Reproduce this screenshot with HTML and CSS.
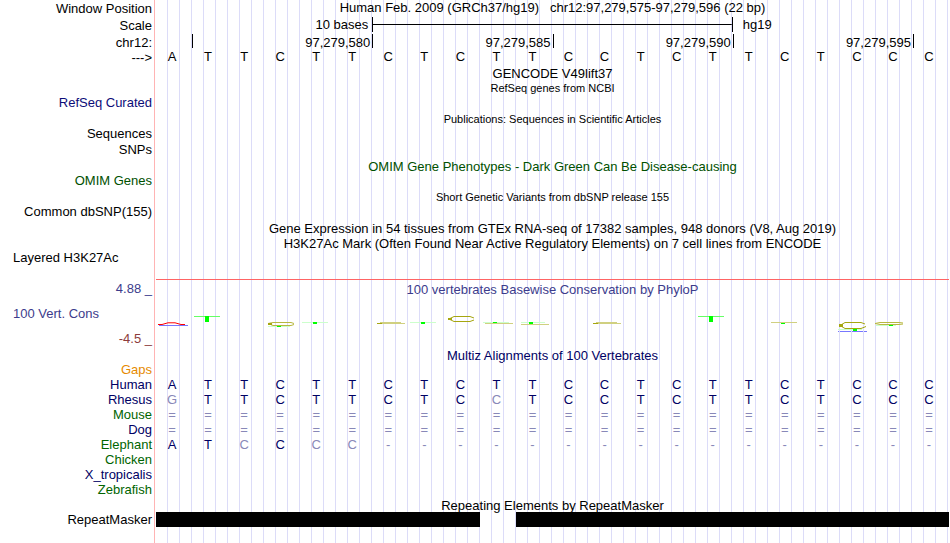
FILE: index.html
```html
<!DOCTYPE html>
<html lang="en">
<head>
  <meta charset="utf-8">
  <title>Genome Browser - hg19 chr12:97,279,575-97,279,596</title>
  <link rel="stylesheet" href="styles.css">
</head>
<body>
  <main class="browser">
    <div class="row tall">
      <div class="label">Window Position</div>
      <div class="track title pre">Human Feb. 2009 (GRCh37/hg19)   chr12:97,279,575-97,279,596 (22 bp)</div>
    </div>
    <div class="row tall">
      <div class="label">Scale</div>
      <div class="track bases scale">
        <span class="scale-size">10 bases</span>
        <span class="scale-bar"></span>
        <span class="scale-db">hg19</span>
      </div>
    </div>
    <div class="row">
      <div class="label lower">chr12:</div>
      <div class="track bases ruler">
        <span class="tick first"></span>
        <span class="tick">97,279,580</span>
        <span class="tick">97,279,585</span>
        <span class="tick">97,279,590</span>
        <span class="tick">97,279,595</span>
      </div>
    </div>
    <div class="row tall">
      <div class="label">---&gt;</div>
      <div class="track bases" data-seq="ATTCTTCTCTTCCTCTTCTCCC"></div>
    </div>

    <!-- gene and variant tracks -->
    <div class="row"><div class="label"></div><div class="track title">GENCODE V49lift37</div></div>
    <div class="row"><div class="label"></div><div class="track title small">RefSeq genes from NCBI</div></div>
    <div class="row"><div class="label upper refseq">RefSeq Curated</div><div class="track"></div></div>
    <div class="row mid"><div class="label"></div><div class="track title small">Publications: Sequences in Scientific Articles</div></div>
    <div class="row"><div class="label upper">Sequences</div><div class="track"></div></div>
    <div class="row mid"><div class="label">SNPs</div><div class="track"></div></div>
    <div class="row mid"><div class="label"></div><div class="track title omim">OMIM Gene Phenotypes - Dark Green Can Be Disease-causing</div></div>
    <div class="row"><div class="label upper omim">OMIM Genes</div><div class="track"></div></div>
    <div class="row mid"><div class="label"></div><div class="track title small">Short Genetic Variants from dbSNP release 155</div></div>
    <div class="row"><div class="label upper">Common dbSNP(155)</div><div class="track"></div></div>
    <div class="row mid"><div class="label"></div><div class="track title">Gene Expression in 54 tissues from GTEx RNA-seq of 17382 samples, 948 donors (V8, Aug 2019)</div></div>
    <div class="row"><div class="label"></div><div class="track title">H3K27Ac Mark (Often Found Near Active Regulatory Elements) on 7 cell lines from ENCODE</div></div>
    <div class="row signal">
      <div class="label left upper">Layered H3K27Ac</div>
      <div class="track baseline"></div>
    </div>

    <!-- conservation -->
    <div class="row tall">
      <div class="label cons">4.88 _</div>
      <div class="track title lower cons">100 vertebrates Basewise Conservation by PhyloP</div>
    </div>
    <div class="row wiggle">
      <div class="label left cons">100 Vert. Cons</div>
      <div class="track">
        <svg class="logo" viewBox="0 0 793 36" preserveAspectRatio="none" aria-hidden="true">
          <g stroke="#7777ff" stroke-width="1">
            <path d="M3 28.5 H32 M682 34.5 H711"/>
          </g>
          <path d="M2 27.5 L6 27.5 L12 25.8 H19 L25 27.5 H29" fill="none" stroke="#f00" stroke-width="1"/>
          <g stroke="#66ff66" stroke-width="1">
            <path d="M38 19.5 H64 M542 19.5 H568"/>
          </g>
          <g stroke="#ccffcc" stroke-width="1">
            <path d="M146 25.5 H172 M254 25.5 H280 M327 25.5 H353 M365 25.5 H389 M682 32.5 H706 M112 29.5 H134 M720 28.5 H740"/>
          </g>
          <g fill="#0f0">
            <rect x="49" y="19" width="4" height="6"/>
            <rect x="553" y="19" width="4" height="6"/>
            <rect x="157" y="25" width="4" height="2"/>
            <rect x="265" y="25" width="4" height="2"/>
            <rect x="373" y="25" width="4" height="2"/>
            <rect x="337" y="25" width="4" height="1"/>
            <rect x="121" y="29" width="4" height="1"/>
            <rect x="625" y="26" width="4" height="1"/>
            <rect x="697" y="32" width="4" height="2"/>
            <rect x="733" y="28" width="4" height="1"/>
          </g>
          <g fill="none" stroke="#a6a610" stroke-width="1">
            <path d="M138 26.5 L135 25.5 H117 L112 26.5 L117 28.5 H135 L138 27.5" stroke="#b8b840"/>
            <path d="M318 21 L314 19.5 H298 L293 22 L298 24.5 H314 L318 23"/>
            <path d="M709 27 L705 25.5 H689 L684 28.5 L689 31.5 H705 L710 29.5"/>
            <path d="M747 26 L743 25.5 H724 L719 26.5 L724 27.5 H743 L747 27" stroke="#b8b840"/>
          </g>
          <g stroke="#d0d080">
            <path d="M221 26.5 H249 M224 25.5 H245 M329 26.5 H357 M365 27.5 H393 M437 26.5 H465 M440 25.5 H461 M615 25.5 H641"/>
          </g>
          <g fill="#a6a610">
            <rect x="112" y="26" width="4" height="2"/>
            <rect x="292" y="21" width="4" height="2"/>
            <rect x="683" y="27" width="4" height="3"/>
            <rect x="221" y="26" width="5" height="1"/>
            <rect x="437" y="26" width="5" height="1"/>
          </g>
        </svg>
      </div>
    </div>
    <div class="row"><div class="label low">-4.5 _</div><div class="track"></div></div>

    <!-- alignments -->
    <div class="row mid"><div class="label"></div><div class="track title lower multiz">Multiz Alignments of 100 Vertebrates</div></div>
    <div class="row"><div class="label gaps">Gaps</div><div class="track"></div></div>
    <div class="row"><div class="label odd">Human</div><div class="track bases multiz" data-seq="ATTCTTCTCTTCCTCTTCTCCC"></div></div>
    <div class="row"><div class="label odd">Rhesus</div><div class="track bases multiz" data-seq="gTTCTTCTCcTCCTCTTCTCCC"></div></div>
    <div class="row"><div class="label even">Mouse</div><div class="track bases multiz" data-seq="======================"></div></div>
    <div class="row"><div class="label odd">Dog</div><div class="track bases multiz" data-seq="======================"></div></div>
    <div class="row"><div class="label even">Elephant</div><div class="track bases multiz" data-seq="ATcCcc----------------"></div></div>
    <div class="row"><div class="label even">Chicken</div><div class="track"></div></div>
    <div class="row"><div class="label odd">X_tropicalis</div><div class="track"></div></div>
    <div class="row"><div class="label even">Zebrafish</div><div class="track"></div></div>

    <div class="row"><div class="label"></div><div class="track title lower">Repeating Elements by RepeatMasker</div></div>
    <div class="row">
      <div class="label">RepeatMasker</div>
      <div class="track bases">
        <span class="repeat left-part"></span>
        <span class="repeat right-part"></span>
      </div>
    </div>
    <div class="row mid"><div class="label"></div><div class="track"></div></div>
  </main>

  <script src="script.js"></script>
</body>
</html>
```
FILE: styles.css
```css
body {
  margin: 0;
  background-color: #fff;
  color: #000;
  font-family: "Liberation Sans", Arial, Helvetica, sans-serif;
  font-size: 13px;
  line-height: 15px;
}

.browser {
  padding-right: 1px;
}

.row {
  display: flex;
  height: 15px;
}

.row.mid {
  height: 16px;
}

.row.tall {
  height: 17px;
}

.row.signal {
  height: 29px;
}

.row.wiggle {
  height: 34px;
}

.label {
  box-sizing: border-box;
  width: 155px;
  padding-right: 2px;
  border-right: 1px solid #ffb4b4;
  margin-right: 1px;
  flex-shrink: 0;
  text-align: right;
  white-space: nowrap;
}

.tall .label {
  line-height: 17px;
}

.label.left {
  padding-left: 13px;
  text-align: left;
}

.label.upper {
  line-height: 13px;
}

.label.lower {
  line-height: 17px;
}

.wiggle .label {
  line-height: 34px;
}

/* light guide lines, one every 12px */
.track {
  flex: 1;
  min-width: 0;
  background: repeating-linear-gradient(to right, transparent 0 11px, #dcdcf8 11px 12px);
}

.title {
  text-align: center;
  white-space: nowrap;
}

.mid .title,
.tall .title,
.title.lower {
  line-height: 17px;
}

.mid .title.lower,
.tall .title.lower {
  line-height: 19px;
}

.tall .title.pre {
  white-space: pre;
  line-height: 15px;
}

.title.small {
  font-size: 11px;
}

.baseline {
  border-bottom: 1px solid #ff6464;
}

/* one column for each of the 22 bases */
.bases {
  display: grid;
  grid-template-columns: repeat(22, minmax(0, 1fr));
}

.base {
  padding-right: 4px;
  text-align: center;
}

.base.diff {
  color: #8888b8;
}

.scale-size {
  grid-column: span 6;
  padding-right: 4px;
  text-align: right;
  line-height: 16px;
}

.scale-bar {
  grid-column: span 10;
  height: 15px;
  border-left: 1px solid #000;
  border-right: 1px solid #000;
  background: linear-gradient(#000, #000) center / 100% 1px no-repeat;
}

.scale-db {
  grid-column: span 6;
  padding-left: 10px;
  line-height: 16px;
}

.tick {
  grid-column: span 5;
  height: 14px;
  margin-right: -1px;
  padding-right: 2px;
  border-right: 1px solid #000;
  text-align: right;
  line-height: 17px;
}

.tick.first {
  grid-column: span 1;
}

.logo {
  display: block;
  width: 100%;
  height: 36px;
}

.repeat {
  background-color: #000;
}

.left-part {
  grid-column: 1 / span 9;
}

.right-part {
  grid-column: 11 / span 12;
}

.refseq {
  color: #0c0c78;
}

.omim {
  color: #005000;
}

.cons {
  color: #3c3c8c;
}

.low {
  color: #8c3c3c;
}

.multiz,
.odd {
  color: #000064;
}

.even {
  color: #006400;
}

.gaps {
  color: #e68a00;
}
```
FILE: script.js
```javascript
// lower case letters, gaps and unaligned bases are drawn lighter
document.querySelectorAll('[data-seq]').forEach((track) => {
  for (const letter of track.dataset.seq) {
    const base = document.createElement('span');
    base.className = /[A-Z]/.test(letter) ? 'base' : 'base diff';
    base.textContent = letter.toUpperCase();
    track.appendChild(base);
  }
});
```
